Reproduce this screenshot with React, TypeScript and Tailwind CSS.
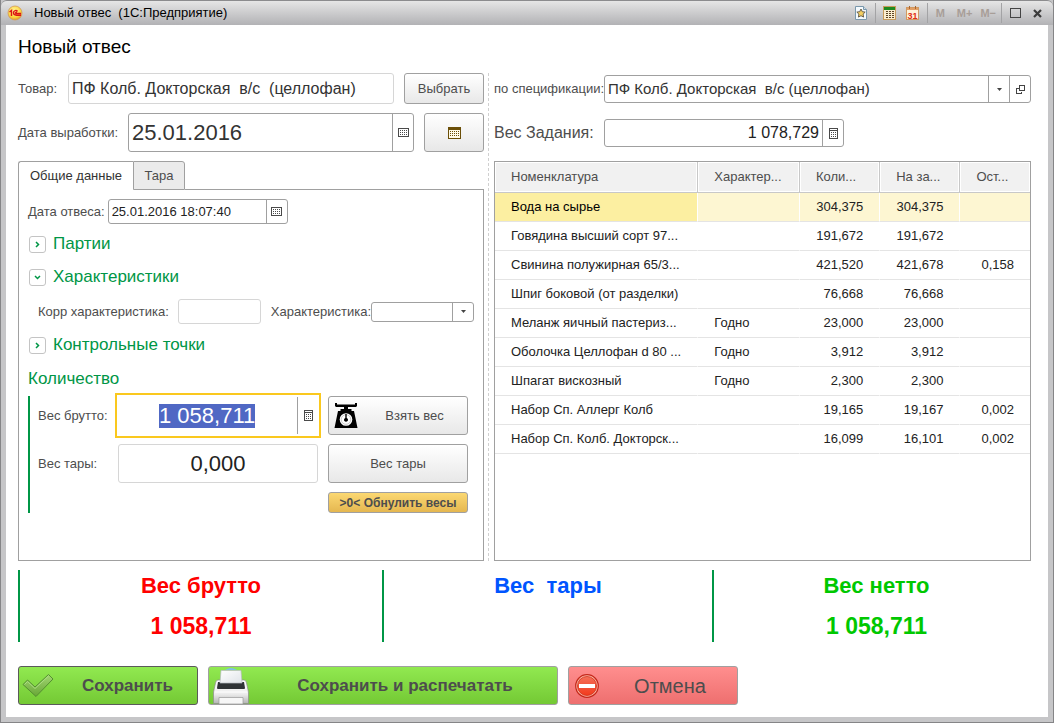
import type { ReactNode } from "react";

interface Row {
  name: string;
  kind?: string;
  amount: string;
  task: string;
  rest?: string;
}

const rows: Row[] = [
  { name: "Вода на сырье", amount: "304,375", task: "304,375" },
  { name: "Говядина высший сорт 97...", amount: "191,672", task: "191,672" },
  { name: "Свинина полужирная 65/3...", amount: "421,520", task: "421,678", rest: "0,158" },
  { name: "Шпиг боковой (от разделки)", amount: "76,668", task: "76,668" },
  { name: "Меланж яичный пастериз...", kind: "Годно", amount: "23,000", task: "23,000" },
  { name: "Оболочка Целлофан d 80 ...", kind: "Годно", amount: "3,912", task: "3,912" },
  { name: "Шпагат вискозный", kind: "Годно", amount: "2,300", task: "2,300" },
  { name: "Набор Сп. Аллерг Колб", amount: "19,165", task: "19,167", rest: "0,002" },
  { name: "Набор Сп. Колб. Докторск...", amount: "16,099", task: "16,101", rest: "0,002" },
];

function CalendarIcon() {
  return (
    <svg width="11" height="9" viewBox="0 0 11 9" shapeRendering="crispEdges" aria-hidden="true">
      <rect x="0.5" y="0.5" width="10" height="8" fill="none" stroke="#4a4a4a" />
      {[2, 4, 6].map((y) => (
        <path key={y} d={`M2 ${y}.5h7`} stroke="#4a4a4a" strokeDasharray="1 1" />
      ))}
    </svg>
  );
}

function BigCalendarIcon() {
  return (
    <svg width="13" height="12" viewBox="0 0 13 12" shapeRendering="crispEdges" aria-hidden="true">
      <rect x="0.5" y="0.5" width="12" height="11" fill="#fffbe8" stroke="#6b4f08" />
      <path d="M0 0h13v3H0z" fill="#6b4f08" />
      {[4, 6, 8].map((y) => (
        <path key={y} d={`M2 ${y}.5h9`} stroke="#6b4f08" strokeDasharray="1 1" />
      ))}
    </svg>
  );
}

function CalculatorIcon() {
  return (
    <svg width="9" height="11" viewBox="0 0 9 11" shapeRendering="crispEdges" aria-hidden="true">
      <rect x="0.5" y="0.5" width="8" height="10" fill="none" stroke="#4a4a4a" />
      <path d="M0 2.5h9" stroke="#4a4a4a" />
      {[4, 6, 8].map((y) => (
        <path key={y} d={`M2 ${y}.5h5`} stroke="#4a4a4a" strokeDasharray="1 1" />
      ))}
    </svg>
  );
}

function CaretIcon() {
  return (
    <svg width="5" height="3" viewBox="0 0 5 3" aria-hidden="true">
      <path d="M0 0h5L2.5 3z" fill="#444" />
    </svg>
  );
}

function OpenIcon() {
  return (
    <svg width="9" height="9" viewBox="0 0 9 9" fill="none" stroke="#444" shapeRendering="crispEdges" aria-hidden="true">
      <path d="M3.5.5h5v5h-5z M2.5 3.5h-2v5h5v-2" />
    </svg>
  );
}

function LogoIcon() {
  return (
    <svg width="16" height="16" viewBox="0 0 16 16" aria-hidden="true">
      <defs>
        <radialGradient id="logo" cx="45%" cy="35%" r="65%">
          <stop offset="0" stopColor="#fff6a0" />
          <stop offset="0.7" stopColor="#fcd53c" />
          <stop offset="1" stopColor="#e0952c" />
        </radialGradient>
      </defs>
      <circle cx="8" cy="8" r="7" fill="url(#logo)" stroke="#d39a5a" strokeWidth="0.8" />
      <path d="M2.5 7l2-1.5V11M10.5 6.5C9.5 5 6.5 5.3 6.5 7.6c0 2 1.5 2.6 3 2.6H14M9.8 7.6c-1.2-.7-1.8.5-.8.9h5" fill="none" stroke="#dc1414" strokeWidth="1.4" />
    </svg>
  );
}

function StarPageIcon() {
  return (
    <svg width="12" height="14" viewBox="0 0 12 14" aria-hidden="true">
      <path d="M.5.5h8l3 3v10H.5z" fill="#f5fafd" stroke="#7a98ac" />
      <path d="M8.5.5v3h3" fill="#cfe0ea" stroke="#7a98ac" />
      <path d="M6 3l1.3 2.7 2.9.4-2.1 2 .5 3L6 9.7l-2.6 1.4.5-3-2.1-2 2.9-.4z" fill="#f4cf62" stroke="#5c5443" strokeWidth="0.9" />
    </svg>
  );
}

function CalcColorIcon() {
  return (
    <svg width="13" height="14" viewBox="0 0 13 14" shapeRendering="crispEdges" aria-hidden="true">
      <rect x="0.5" y="0.5" width="12" height="13" fill="#fbeed0" stroke="#c89b5c" />
      <path d="M1 1h11v3H1z" fill="#1f8a1f" />
      {[5, 7, 9, 11].map((y) => (
        <path key={y} d={`M3 ${y}.5h8`} stroke="#5d4526" strokeDasharray="2 1" />
      ))}
    </svg>
  );
}

function DateColorIcon() {
  return (
    <svg width="13" height="14" viewBox="0 0 13 14" aria-hidden="true">
      <rect x="0.5" y="1.5" width="12" height="12" fill="#fff3da" stroke="#d19a63" />
      <path d="M1 2h11v2H1z" fill="#e3a066" />
      <path d="M3.5 0v3M9.5 0v3" stroke="#a8652f" />
      <text x="6.5" y="12.5" textAnchor="middle" fontSize="9" fontWeight="bold" fontFamily="Liberation Sans" fill="#e02f16">
        31
      </text>
    </svg>
  );
}

function ScalesIcon() {
  return (
    <svg width="24" height="25" viewBox="0 0 24 25" aria-hidden="true">
      <path d="M1 0h2v1.500h18V0h2v3l-1 1h-8v2h3.500v2H20l3.500 17H.5L4 8h2.500V6H10V4H2L1 3z" fill="#000" />
      <circle cx="12" cy="16.500" r="6.300" fill="#fff" />
      <circle cx="12" cy="16.500" r="4.800" fill="none" stroke="#bbb" strokeWidth="0.800" />
      <path d="M11.300 11h1.400v4a2 2 0 1 1-1.400 0z" fill="#000" />
    </svg>
  );
}

function CheckIcon() {
  return (
    <svg width="32" height="25" viewBox="0 0 32 25" aria-hidden="true">
      <defs>
        <linearGradient id="tick" x1="0" y1="0" x2="0" y2="1">
          <stop offset="0" stopColor="#a2d673" />
          <stop offset="1" stopColor="#68a636" />
        </linearGradient>
      </defs>
      <path d="M1 11.500L5.500 7l7.500 7L26.500 1.500 31 6 14 23.500z" fill="url(#tick)" stroke="#548f30" strokeLinejoin="round" />
      <path d="M2.500 11.500l3-3 7.500 7L26.500 3" fill="none" stroke="#b4e48b" strokeWidth="0.800" />
    </svg>
  );
}

function PrinterIcon() {
  return (
    <svg width="36" height="36" viewBox="0 0 36 36" aria-hidden="true">
      <defs>
        <linearGradient id="printer" x1="0" y1="0" x2="0" y2="1">
          <stop offset="0" stopColor="#fff" />
          <stop offset="0.600" stopColor="#ececec" />
          <stop offset="1" stopColor="#b4b4b4" />
        </linearGradient>
        <linearGradient id="paper" x1="0" y1="0" x2="1" y2="1">
          <stop offset="0" stopColor="#fff" />
          <stop offset="1" stopColor="#dfe3e8" />
        </linearGradient>
      </defs>
      <path d="M12 2q6-4 12 0z" fill="#7fc0e0" />
      <path d="M5 12h26q2 0 2.500 3l2 9v11.500H.5V24l2-9q.5-3 2.500-3z" fill="url(#printer)" stroke="#8c8c8c" strokeWidth="0.700" />
      <path d="M5 14h26l1 6q0 1-1 1H5q-1 0-1-1z" fill="#2f3336" />
      <path d="M8 2.500h20l1 12.500H7z" fill="url(#paper)" stroke="#b7bcc2" strokeWidth="0.700" />
      <path d="M2 24h32" stroke="#fff" />
      <path d="M6 29.500h24V36H6z" fill="#f7f7f7" stroke="#999" strokeWidth="0.700" />
    </svg>
  );
}

function StopIcon() {
  return (
    <svg width="24" height="24" viewBox="0 0 24 24" aria-hidden="true">
      <defs>
        <linearGradient id="stop" x1="0" y1="0" x2="0" y2="1">
          <stop offset="0" stopColor="#f4705a" />
          <stop offset="1" stopColor="#f23a1c" />
        </linearGradient>
      </defs>
      <circle cx="12" cy="12" r="11.300" fill="#fbb5a4" stroke="#c4281a" strokeWidth="1.200" />
      <circle cx="12" cy="12" r="9.500" fill="url(#stop)" stroke="#d0361f" strokeWidth="0.800" />
      <path d="M4 10h16v4H4z" fill="#fff" />
    </svg>
  );
}

function TitleDivider() {
  return <span className="h-5 w-px bg-[#a3a3a5]" />;
}

interface FieldProps {
  id: string;
  value?: string;
  className: string;
  inputClass?: string;
  children?: ReactNode;
}

function Field({ id, value = "", className, inputClass = "", children }: FieldProps) {
  return (
    <div className={`flex min-w-0 overflow-hidden rounded-[3px] border bg-white ${className}`}>
      <input id={id} defaultValue={value} className={`min-w-0 flex-1 bg-transparent px-[3px] outline-none ${inputClass}`} />
      {children}
    </div>
  );
}

function SelectField({ id, value = "", className, inputClass = "", children }: FieldProps) {
  return (
    <div className={`flex min-w-0 overflow-hidden rounded-[3px] border bg-white ${className}`}>
      <div className="relative flex min-w-0 flex-1">
        <select id={id} defaultValue={value} className={`w-full appearance-none bg-transparent pr-6 pl-[3px] outline-none ${inputClass}`}>
          <option value={value}>{value}</option>
        </select>
        <span className="pointer-events-none absolute inset-y-0 right-0 flex w-[21px] items-center justify-center border-l border-[#a0a0a0]">
          <CaretIcon />
        </span>
      </div>
      {children}
    </div>
  );
}

function FieldButton({ label, children }: { label: string; children: ReactNode }) {
  return (
    <button type="button" aria-label={label} className="flex w-[21px] shrink-0 items-center justify-center border-l border-[#a0a0a0]">
      {children}
    </button>
  );
}

function Group({ title, open = false }: { title: string; open?: boolean }) {
  return (
    <button type="button" aria-expanded={open} className="flex h-6 items-center gap-[7px] text-[17px] text-[#009646]">
      <span className="flex size-[17px] items-center justify-center rounded-[3px] border border-[#c4c4c4]">
        <svg width="7" height="7" viewBox="0 0 7 7" fill="none" stroke="#009646" strokeWidth="1.500" aria-hidden="true">
          <path d={open ? "M1 2l2.500 2.500L6 2" : "M2 1l2.500 2.500L2 6"} />
        </svg>
      </span>
      {title}
    </button>
  );
}

const greyButton = "rounded-[3px] border border-[#a0a0a0] bg-linear-to-b from-white to-[#e8e8e8] text-[#4d4d4d]";

function TitleBar() {
  return (
    <header className="flex h-[25px] items-center rounded-t-md border-t border-[#8c8c8e] bg-linear-to-b from-[#e6e6e6] to-[#b2b2b5] pr-[11px] pl-1.5">
      <LogoIcon />
      <span className="ml-[11px] flex-1 whitespace-pre text-black">{"Новый отвес  (1С:Предприятие)"}</span>
      <div className="flex items-center text-[11px] font-bold text-[#a89e98]">
        <button type="button" aria-label="Избранное" className="mr-2"><StarPageIcon /></button>
        <TitleDivider />
        <button type="button" aria-label="Калькулятор" className="mr-1.5 ml-[7px]"><CalcColorIcon /></button>
        <button type="button" aria-label="Календарь" className="mr-2 ml-1"><DateColorIcon /></button>
        <TitleDivider />
        <button type="button" className="ml-2">M</button>
        <button type="button" className="ml-3">M+</button>
        <button type="button" className="mr-[5px] ml-2">M−</button>
        <TitleDivider />
        <button type="button" aria-label="Развернуть" className="ml-2">
          <svg width="11" height="10" viewBox="0 0 11 10" shapeRendering="crispEdges">
            <path d="M.5.5h10v9H.5z" fill="none" stroke="#444" />
          </svg>
        </button>
        <button type="button" aria-label="Закрыть" className="ml-3">
          <svg width="9" height="9" viewBox="0 0 9 9">
            <path d="M1 1l7 7M8 1L1 8" stroke="#3c3c3c" strokeWidth="2.200" />
          </svg>
        </button>
      </div>
    </header>
  );
}

function GeneralTab() {
  return (
    <div className="flex flex-1 flex-col border border-t-0 border-[#a0a0a0] px-[9px] pt-[9px]">
      <div className="flex items-center gap-[3px]">
        <label htmlFor="weighDate">Дата отвеса:</label>
        <Field id="weighDate" value="25.01.2016 18:07:40" className="h-[25px] w-[180px] border-[#a0a0a0]" inputClass="text-[#222]">
          <FieldButton label="Выбрать дату"><CalendarIcon /></FieldButton>
        </Field>
      </div>

      <div className="mt-2 flex flex-col items-start gap-[9px] pl-px">
        <Group title="Партии" />
        <Group title="Характеристики" open />
      </div>
      <div className="mt-2.5 flex items-center pl-2.5">
        <label htmlFor="corr" className="w-[140px]">Корр характеристика:</label>
        <Field id="corr" className="h-[25px] w-[83px] border-[#d6d6d6]" />
        <label htmlFor="feature" className="ml-2.5 flex-1 whitespace-nowrap">Характеристика:</label>
        <SelectField id="feature" className="h-5 w-[103px] border-[#a0a0a0]" />
      </div>
      <div className="mt-[9px] pl-px">
        <Group title="Контрольные точки" />
      </div>

      <h2 className="mt-2.5 text-[17px] leading-6 text-[#009646]">Количество</h2>
      <div className="mt-[5px] flex border-l-2 border-[#009646]">
        <div className="flex min-w-0 flex-1 flex-col">
          <div className="-mt-[3px] flex items-center">
            <label htmlFor="gross" className="w-[85px] pl-2">Вес брутто:</label>
            <div className="flex h-[45px] min-w-0 flex-1 border-2 border-[#fac81e] bg-white py-0.5">
              <div className="flex flex-1 items-center justify-center">
                <input id="gross" defaultValue="1 058,711" className="h-6 w-24 bg-[#5068c4] text-center text-[22px] text-white outline-none" />
              </div>
              <button type="button" aria-label="Калькулятор" className="flex w-[22px] items-center justify-center border-l border-[#a0a0a0]">
                <CalculatorIcon />
              </button>
            </div>
          </div>
          <div className="mt-1.5 flex items-center pr-[3px]">
            <label htmlFor="tare" className="w-[88px] pl-2">Вес тары:</label>
            <Field id="tare" value="0,000" className="h-[39px] flex-1 border-[#d6d6d6]" inputClass="text-center text-[22px] text-[#222]" />
          </div>
        </div>
        <div className="mr-1.5 ml-[7px] flex w-[140px] flex-col">
          <button type="button" className={`flex h-[39px] items-center pl-[5px] ${greyButton}`}>
            <ScalesIcon />
            <span className="flex-1 pl-1">Взять вес</span>
          </button>
          <button type="button" className={`mt-[9px] h-[39px] ${greyButton}`}>Вес тары</button>
          <button type="button" className="mt-[9px] h-[21px] rounded-[3px] border border-[#a0a0a0] bg-linear-to-b from-[#fbd872] to-[#e5b750] text-xs font-bold text-[#4d4d4d]">
            &gt;0&lt; Обнулить весы
          </button>
        </div>
      </div>
    </div>
  );
}

function SpecTable() {
  const head = "border-r border-b border-[#c8c8c8] bg-[#f1f1f1] pl-4 text-left font-normal text-[#4d4d4d] shadow-[inset_0_0_0_1px_#fff] last:border-r-0";
  return (
    <div className="flex-1 border border-[#a0a0a0]">
      <table className="w-full table-fixed border-separate border-spacing-0 whitespace-nowrap text-[#222]">
        <colgroup>
          <col className="w-[38%]" />
          <col className="w-[19%]" />
          <col className="w-[15%]" />
          <col className="w-[15%]" />
          <col className="w-[13%]" />
        </colgroup>
        <thead>
          <tr className="h-[31px]">
            <th className={head}>Номенклатура</th>
            <th className={head}>Характер...</th>
            <th className={head}>Коли...</th>
            <th className={head}>На за...</th>
            <th className={head}>Ост...</th>
          </tr>
        </thead>
        <tbody>
          {rows.map((row, i) => {
            const cell = `border-r border-b border-r-white border-b-[#e4e4e4] last:border-r-0 ${i === 0 ? "bg-[#fdf6d2]" : ""}`;
            return (
              <tr key={row.name} className="h-[29px]">
                <td className={`border-r border-b border-r-white border-b-[#e4e4e4] pl-4 ${i === 0 ? "bg-[#fcefa1] text-black" : ""}`}>{row.name}</td>
                <td className={`pl-4 ${cell}`}>{row.kind}</td>
                <td className={`pr-4 text-right ${cell}`}>{row.amount}</td>
                <td className={`pr-4 text-right ${cell}`}>{row.task}</td>
                <td className={`pr-4 text-right ${cell}`}>{row.rest}</td>
              </tr>
            );
          })}
        </tbody>
      </table>
    </div>
  );
}

function Total({ title, value, className }: { title: string; value?: string; className: string }) {
  return (
    <div className={`border-l-2 border-[#009646] text-center text-[22px] leading-8 font-bold ${className}`}>
      <div className="whitespace-pre">{title}</div>
      <div className="mt-2 text-[23px]">{value}</div>
    </div>
  );
}

export default function App() {
  return (
    <div className="flex min-h-screen flex-col border-x border-b border-[#858587] bg-[#c6c6c8] font-['Liberation_Sans',Arial,sans-serif] text-[13px] leading-4 text-[#4d4d4d]">
      <TitleBar />
      <main className="mx-[5px] mb-[5px] flex flex-1 flex-col bg-white pt-2.5 pr-[17px] pb-3 pl-3">
        <h1 className="text-[19px] leading-6 text-black">Новый отвес</h1>

        <div className="mt-3.5 grid flex-1 grid-cols-[minmax(0,466fr)_minmax(0,537fr)] gap-x-2.5">
          <section className="flex flex-col">
            <div className="flex items-center">
              <label htmlFor="product" className="w-[50px]">Товар:</label>
              <Field id="product" value="ПФ Колб. Докторская  в/с  (целлофан)" className="h-[31px] flex-1 border-[#d6d6d6]" inputClass="text-base text-[#333]" />
              <button type="button" className={`ml-2.5 h-[31px] w-20 ${greyButton}`}>Выбрать</button>
            </div>
            <div className="mt-[9px] flex items-center">
              <label htmlFor="made" className="w-[110px]">Дата выработки:</label>
              <Field id="made" value="25.01.2016" className="h-[39px] flex-1 border-[#a0a0a0]" inputClass="text-[22px] text-[#333]">
                <FieldButton label="Выбрать дату"><CalendarIcon /></FieldButton>
              </Field>
              <button type="button" aria-label="Календарь" className={`ml-2.5 flex h-[39px] w-[60px] items-center justify-center ${greyButton}`}>
                <BigCalendarIcon />
              </button>
            </div>

            <div role="tablist" className="mt-[9px] flex h-[29px]">
              <button type="button" role="tab" aria-selected="true" className="w-[115px] rounded-tl-[3px] border-t border-l border-[#a0a0a0] text-[#333]">
                Общие данные
              </button>
              <button type="button" role="tab" aria-selected="false" className="w-[52px] rounded-tr-[3px] border border-[#a0a0a0] bg-[#ebebeb]">
                Тара
              </button>
              <span className="flex-1 border-b border-[#a0a0a0]" />
            </div>
            <GeneralTab />
          </section>

          <section className="relative flex flex-col">
            <span className="absolute inset-y-0 -left-1.5 border-l border-dashed border-[#d0d0d0]" />
            <div className="mt-0.5 flex items-center">
              <label htmlFor="spec" className="w-[110px] whitespace-nowrap">по спецификации:</label>
              <SelectField id="spec" value={"ПФ Колб. Докторская \u00a0в/с (целлофан)"} className="h-7 flex-1 border-[#a0a0a0]" inputClass="text-[15px] text-[#333]">
                <FieldButton label="Открыть"><OpenIcon /></FieldButton>
              </SelectField>
            </div>
            <div className="mt-4 flex items-center">
              <label htmlFor="taskWeight" className="w-[110px] text-base whitespace-nowrap">Вес Задания:</label>
              <Field id="taskWeight" value="1 078,729" className="h-7 w-60 border-[#a0a0a0]" inputClass="text-right text-base text-[#222]">
                <FieldButton label="Калькулятор"><CalculatorIcon /></FieldButton>
              </Field>
            </div>
            <div className="mt-3.5 flex flex-1 flex-col">
              <SpecTable />
            </div>
          </section>
        </div>

        <div className="mt-[9px] grid h-[71px] grid-cols-[364fr_330fr_319fr]">
          <Total title="Вес брутто" value="1 058,711" className="text-[#ff0000]" />
          <Total title="Вес  тары" className="text-[#0055ff]" />
          <Total title="Вес нетто" value="1 058,711" className="pl-2 text-[#00c800]" />
        </div>

        <div className="mt-[25px] flex gap-2.5 text-[17px] font-bold text-[#4d4d4d]">
          <button type="button" className="flex h-[39px] w-[180px] items-center rounded-[3px] border border-[#5a5a5a] bg-linear-to-b from-[#91e950] to-[#74c934] pl-[3px]">
            <CheckIcon />
            <span className="flex-1 pl-1">Сохранить</span>
          </button>
          <button type="button" className="flex h-[39px] w-[350px] items-center rounded-[3px] border border-[#a0a0a0] bg-linear-to-b from-[#91e950] to-[#74c934] pl-1">
            <PrinterIcon />
            <span className="flex-1 pl-1">Сохранить и распечатать</span>
          </button>
          <button type="button" className="flex h-[39px] w-[170px] items-center rounded-[3px] border border-[#a0a0a0] bg-linear-to-b from-[#ff8e8e] to-[#ee6f6f] pl-1.5 text-[20px] font-normal">
            <StopIcon />
            <span className="flex-1 pl-1">Отмена</span>
          </button>
        </div>
      </main>
    </div>
  );
}
